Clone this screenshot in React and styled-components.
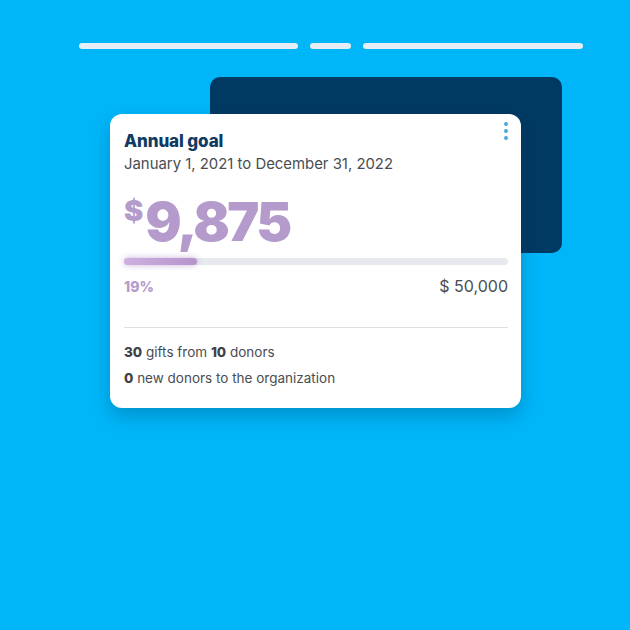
import styled, { createGlobalStyle } from "styled-components";

const GlobalStyle = createGlobalStyle`
  html, body {
    margin: 0;
    padding: 0;
    background: #00b6f8;
  }
  body {
    font-family: Inter, "Noto Sans", sans-serif;
  }
`;

const Page = styled.div`
  width: 630px;
  height: 630px;
  background: #00b6f8;
  overflow: hidden;
`;

const TopBars = styled.div`
  display: flex;
  gap: 12px;
  padding: 43px 0 0 79px;
`;

const Bar = styled.div`
  width: ${(p) => p.w}px;
  height: 6px;
  border-radius: 3px;
  background: #e6edf5;
`;

const Scene = styled.div`
  position: relative;
  padding: 65px 0 0 110px;
`;

const BackPanel = styled.div`
  position: absolute;
  left: 210px;
  top: 28px;
  width: 352px;
  height: 176px;
  border-radius: 10px;
  background: #003a63;
`;

const Card = styled.div`
  position: relative;
  width: 411px;
  height: 294px;
  box-sizing: border-box;
  padding: 16px 13px 0 14px;
  border-radius: 12px;
  background: #fff;
  box-shadow: 0 8px 18px rgba(0, 40, 80, 0.25);
`;

const Menu = styled.div`
  position: absolute;
  right: 13px;
  top: 8px;
  display: flex;
  flex-direction: column;
  gap: 3px;
`;

const Dot = styled.span`
  width: 4px;
  height: 4px;
  border-radius: 50%;
  background: #4aa8e0;
`;

const Title = styled.div`
  font-size: 17px;
  font-weight: 800;
  color: #0f3a62;
  line-height: 22px;
  letter-spacing: -0.1px;
`;

const Dates = styled.div`
  font-size: 14.9px;
  color: #4a4d52;
  line-height: 22px;
  margin-top: 1px;
`;

const Amount = styled.div`
  display: flex;
  align-items: flex-start;
  margin-top: 20px;
  color: #b59bcb;
  font-weight: 900;
  line-height: 1;
`;

const Currency = styled.span`
  font-size: 29px;
  margin-top: 1px;
  margin-right: 2px;
`;

const Figure = styled.span`
  font-size: 54px;
  letter-spacing: -2.6px;
`;

const Track = styled.div`
  height: 7px;
  border-radius: 4px;
  background: #e6e9ee;
  margin-top: 9px;
`;

const Fill = styled.div`
  height: 100%;
  border-radius: 4px;
  background: linear-gradient(90deg, #cdb0e0, #b594cb);
  box-shadow: 0 0 6px rgba(181, 148, 203, 0.7);
`;

const Legend = styled.div`
  display: flex;
  justify-content: space-between;
  align-items: center;
  margin-top: 11px;
`;

const Percent = styled.span`
  font-size: 14px;
  font-weight: 800;
  color: #b59bcb;
`;

const Target = styled.span`
  font-size: 16px;
  color: #4a4d52;
`;

const Divider = styled.div`
  height: 1px;
  background: #dcdfe3;
  margin-top: 31px;
`;

const Stat = styled.div`
  font-size: 13.5px;
  color: #4a4d52;
  margin-top: ${(p) => p.mt}px;
  line-height: 18px;

  b {
    font-weight: 800;
    color: #3f4246;
  }
`;

export default function App() {
  const raised = 9875;
  const goal = 50000;
  const pct = Math.floor((raised / goal) * 100);
  return (
    <Page>
      <GlobalStyle />
      <TopBars>
        <Bar w={219} />
        <Bar w={41} />
        <Bar w={220} />
      </TopBars>
      <Scene>
        <BackPanel />
        <Card>
          <Menu>
            <Dot />
            <Dot />
            <Dot />
          </Menu>
          <Title>Annual goal</Title>
          <Dates>January 1, 2021 to December 31, 2022</Dates>
          <Amount>
            <Currency>$</Currency>
            <Figure>9,875</Figure>
          </Amount>
          <Track>
            <Fill style={{ width: `${pct}%` }} />
          </Track>
          <Legend>
            <Percent>{pct}%</Percent>
            <Target>$ 50,000</Target>
          </Legend>
          <Divider />
          <Stat mt={15}>
            <b>30</b> gifts from <b>10</b> donors
          </Stat>
          <Stat mt={8}>
            <b>0</b> new donors to the organization
          </Stat>
        </Card>
      </Scene>
    </Page>
  );
}
